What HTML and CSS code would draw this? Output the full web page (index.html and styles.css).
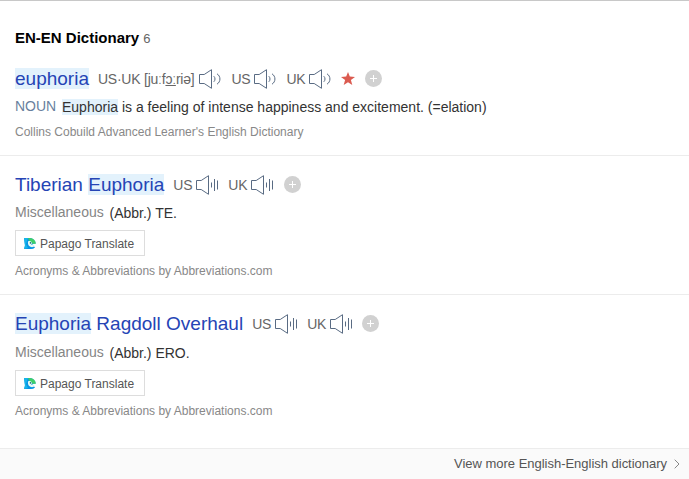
FILE: index.html
```html
<!DOCTYPE html>
<html lang="en">
<head>
<meta charset="utf-8">
<title>EN-EN Dictionary</title>
<link rel="stylesheet" href="styles.css">
</head>
<body>
<svg class="defs" aria-hidden="true">
  <symbol id="speaker" viewBox="0 0 23 20"><path d="M.5 5.5h4.7L12.5.7v18.6l-7.3-4.8H.5z"/><path d="M14.8 7.2c1.6 1.5 1.6 4.1 0 5.6M18 4.8c3.9 2.4 3.9 8 0 10.4"/></symbol>
  <symbol id="speaker-tts" viewBox="0 0 23 20"><path d="M.5 5.5h4.7L12.5.7v18.6l-7.3-4.8H.5z"/><path d="M15.5 7.5v5M18.5 4v12M21.5 5.5v9"/></symbol>
  <symbol id="plus" viewBox="0 0 17 17"><circle cx="8.5" cy="8.5" r="8.5" fill="#d1d1d1"/><path d="M8.5 5v7M5 8.5h7" stroke="#fff"/></symbol>
  <symbol id="papago" viewBox="0 0 12 12"><path d="M0 0h6a6 6 0 0 1 5.7 5.6L8 6l3 3.5A6 6 0 0 1 6 11H0l1-3z" fill="#0795e6"/><path d="M4 0h2a6 6 0 0 1 5.8 5.8H8.5L5 2.6z" fill="#3fcf68"/><path d="M0 0h4L2 6l2 4-4 1 1-4z" fill="#18b5e8"/><path d="M4 3.6c2-1.3 4 .1 4 2L7 6.6l4 1.2C9 10.4 3.2 9.5 4 3.6z" fill="#e9fbf5"/><circle cx="6.5" cy="4.9" r=".8" fill="#166b78"/></symbol>
</svg>
<main class="dictionary">
  <h2 class="heading">EN-EN Dictionary <span class="count">6</span></h2>
  <section class="entry">
    <div class="row">
      <a class="word"><mark>euphoria</mark></a>
      <span class="pron ipa">US·UK [juːf<u>ɔː</u>riə]</span><svg class="speaker"><use href="#speaker"/></svg>
      <span class="pron">US</span><svg class="speaker"><use href="#speaker"/></svg>
      <span class="pron">UK</span><svg class="speaker"><use href="#speaker"/></svg>
      <svg class="star" viewBox="0 0 14 13"><path d="M7 0l1.8 4.6 5.2.3-4.1 3.2L11.3 13 7 10.2 2.7 13l1.4-4.9L0 4.9l5.2-.3z"/></svg>
      <svg class="plus"><use href="#plus"/></svg>
    </div>
    <p class="meaning"><span class="noun">NOUN</span><span class="text"><mark>Euphoria</mark> is a feeling of intense happiness and excitement. (=elation)</span></p>
    <p class="source">Collins Cobuild Advanced Learner's English Dictionary</p>
  </section>
  <section class="entry abbr">
    <div class="row">
      <a class="word">Tiberian <mark>Euphoria</mark></a>
      <span class="pron">US</span><svg class="speaker"><use href="#speaker-tts"/></svg>
      <span class="pron">UK</span><svg class="speaker"><use href="#speaker-tts"/></svg>
      <svg class="plus"><use href="#plus"/></svg>
    </div>
    <p class="meaning"><span class="category">Miscellaneous</span><span class="text">(Abbr.) TE.</span></p>
    <button class="translate"><svg class="papago"><use href="#papago"/></svg><span>Papago Translate</span></button>
    <p class="source">Acronyms &amp; Abbreviations by Abbreviations.com</p>
  </section>
  <section class="entry abbr">
    <div class="row">
      <a class="word"><mark>Euphoria</mark> Ragdoll Overhaul</a>
      <span class="pron">US</span><svg class="speaker"><use href="#speaker-tts"/></svg>
      <span class="pron">UK</span><svg class="speaker"><use href="#speaker-tts"/></svg>
      <svg class="plus"><use href="#plus"/></svg>
    </div>
    <p class="meaning"><span class="category">Miscellaneous</span><span class="text">(Abbr.) ERO.</span></p>
    <button class="translate"><svg class="papago"><use href="#papago"/></svg><span>Papago Translate</span></button>
    <p class="source">Acronyms &amp; Abbreviations by Abbreviations.com</p>
  </section>
</main>
<footer class="more"><span>View more English-English dictionary</span><svg class="chevron" viewBox="0 0 6 10"><path d="M.7.7L5 5 .7 9.3"/></svg></footer>
</body>
</html>
```
FILE: styles.css
```css
* { box-sizing: border-box; }
body {
  margin: 0;
  height: 479px;
  display: flex;
  flex-direction: column;
  border-top: 1px solid #c8c8c8;
  background: #fff;
  color: #333;
  font-family: "Liberation Sans", Arial, sans-serif;
  overflow: hidden;
}
.defs { display: none; }
p, h2 { margin: 0; font-weight: normal; white-space: nowrap; }
svg { flex: none; fill: none; }
mark { background: #e3f2fc; color: inherit; }
.dictionary { height: 447px; flex: none; }
.heading { padding: 27px 0 0 15px; height: 64px; font-size: 15px; line-height: 20px; font-weight: bold; color: #000; }
.count { font-size: 13px; font-weight: normal; color: #666; }
.entry { height: 91px; padding-left: 15px; border-bottom: 1px solid #ececec; }
.abbr { height: 139px; padding-top: 15px; }
.abbr:last-child { border: 0; }
.row { display: flex; align-items: center; height: 28px; white-space: nowrap; }
.word { font-size: 19px; line-height: 22px; color: #2544b5; }
.pron { margin: 0 0 1px 9px; font-size: 14px; line-height: 20px; letter-spacing: -.23px; color: #666; }
.ipa { margin-right: 1px; }
.speaker { width: 23px; height: 20px; margin-left: 4px; stroke: #596b83; }
.star { width: 14px; height: 13px; margin: 0 0 1px 9px; fill: #db5b50; }
.plus { width: 17px; height: 17px; margin: 0 0 1px 10px; }
.abbr:last-child .plus { margin-left: 9px; }
.meaning { display: flex; height: 30px; margin-top: -1px; font-size: 14px; line-height: 30px; }
.abbr:last-child .meaning { margin-top: 0; }
.noun { width: 47px; line-height: 28px; color: #687f9e; }
.category { width: 94.5px; line-height: 28px; color: #858585; }
.source { font-size: 12px; line-height: 20px; color: #888; }
.translate { display: flex; align-items: center; width: 130px; height: 26px; margin: 2px 0 5px; padding: 1px 8px 0; border: 1px solid #ddd; background: #fff; font: 12px "Liberation Sans", Arial, sans-serif; color: #555; white-space: nowrap; }
.papago { width: 12px; height: 12px; margin-right: 4px; }
.more { display: flex; flex: 1; align-items: center; justify-content: flex-end; padding: 0 9px 1px 0; border-top: 1px solid #ececec; background: #fafafa; font-size: 13px; letter-spacing: -.02px; color: #555; }
.chevron { width: 6px; height: 10px; margin-left: 7px; stroke: #888; }
```
